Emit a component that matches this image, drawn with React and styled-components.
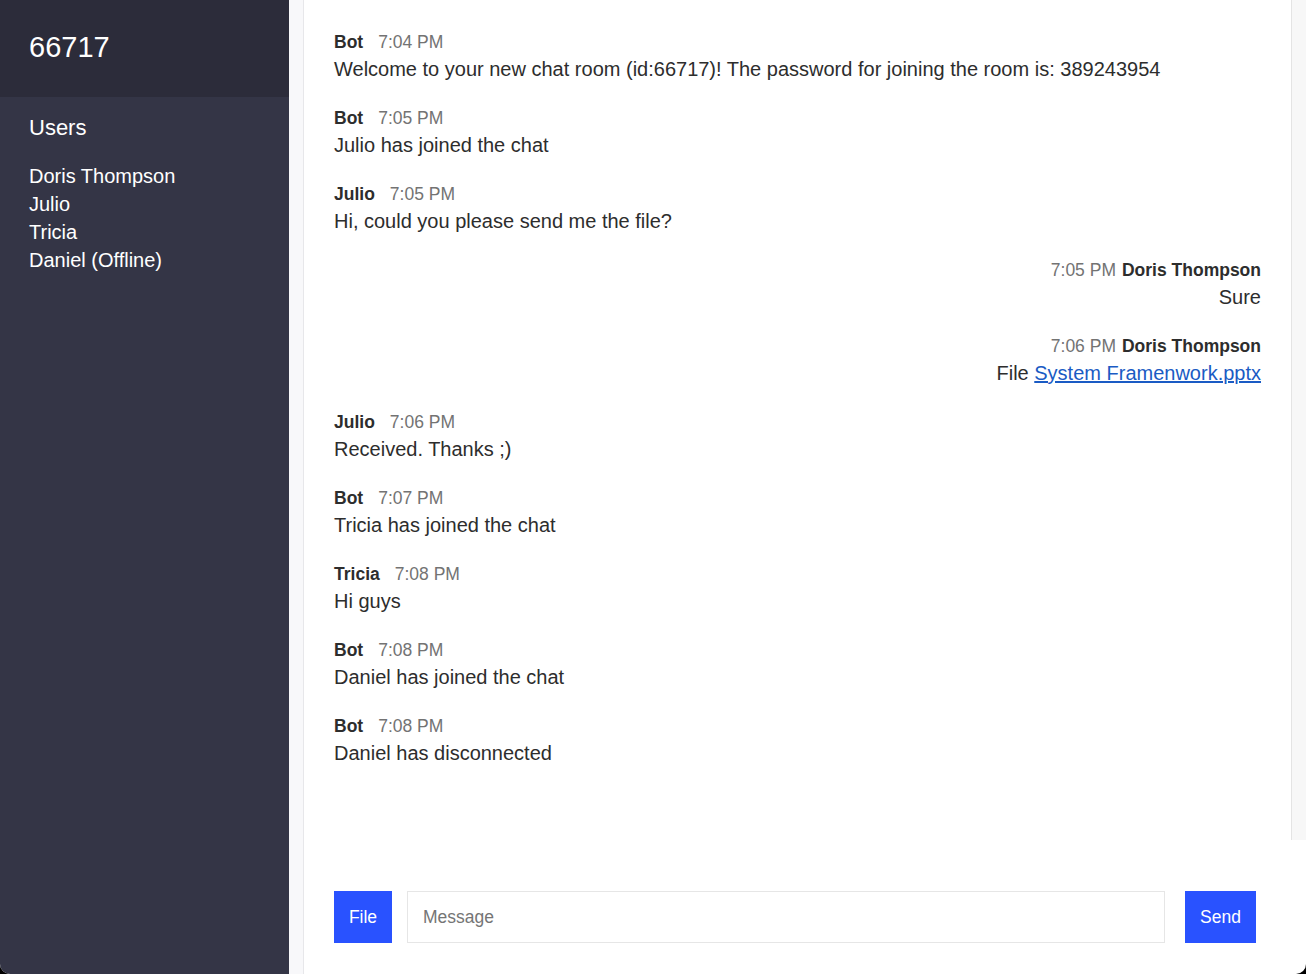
import React from 'react';
import styled, { createGlobalStyle } from 'styled-components';

const GlobalStyle = createGlobalStyle`
  html, body {
    margin: 0;
    padding: 0;
    background: #000;
  }
  body {
    font-family: "Liberation Sans", Arial, sans-serif;
  }
  * {
    box-sizing: border-box;
  }
`;

const Window = styled.div`
  display: flex;
  height: 974px;
  width: 1306px;
  overflow: hidden;
  border-radius: 0 0 10px 10px;
  background: #fff;
`;

const Sidebar = styled.aside`
  width: 289px;
  flex-shrink: 0;
  background-color: #343546;
  color: #fff;
  display: flex;
  flex-direction: column;
`;

const RoomTitle = styled.div`
  height: 97px;
  background-color: #2c2c3a;
  padding: 0 29px 2px;
  display: flex;
  align-items: center;
  font-size: 29px;
`;

const UsersBlock = styled.div`
  padding: 17px 29px;
`;

const UsersHeading = styled.h2`
  margin: 0 0 20px;
  font-size: 22px;
  font-weight: normal;
  line-height: 28px;
`;

const UserList = styled.ul`
  list-style: none;
  margin: 0;
  padding: 0;

  li {
    font-size: 20px;
    line-height: 28px;
  }
`;

const Gutter = styled.div`
  width: 15px;
  flex-shrink: 0;
  background-color: #f8f8fa;
  border-right: 1px solid #e7e7ea;
`;

const ChatPanel = styled.main`
  flex: 1;
  display: flex;
  flex-direction: column;
  min-width: 0;
`;

const ScrollArea = styled.div`
  height: 840px;
  display: flex;
`;

const Messages = styled.div`
  flex: 1;
  padding: 30px 30px;
  color: #2d2d2d;
`;

const ScrollTrack = styled.div`
  width: 15px;
  background-color: #f7f7f7;
  border-left: 1px solid #e4e4e4;
`;

const Message = styled.div`
  margin-bottom: 23px;
  text-align: ${p => (p.$mine ? 'right' : 'left')};
`;

const Meta = styled.div`
  font-size: 17.5px;
  line-height: 24px;
`;

const Author = styled.span`
  font-weight: bold;
  color: #2d2d2d;
`;

const Time = styled.span`
  color: #737373;
  margin: ${p => (p.$mine ? '0 6px 0 0' : '0 0 0 15px')};
`;

const Body = styled.div`
  margin-top: 1px;
  font-size: 20px;
  line-height: 28px;
`;

const FileLink = styled.a`
  color: #1a5bc4;
  text-decoration: underline;
`;

const Composer = styled.form`
  flex: 1;
  display: flex;
  align-items: flex-start;
  padding: 51px 50px 0 30px;
`;

const Button = styled.button`
  width: ${p => p.$w}px;
  height: 52px;
  padding: 0;
  border: none;
  background-color: #2952ff;
  color: #fff;
  font-family: "Liberation Sans", Arial, sans-serif;
  font-size: 17.5px;
  flex-shrink: 0;
`;

const MessageInput = styled.input`
  flex: 1;
  height: 52px;
  margin: 0 20px 0 15px;
  padding: 0 15px;
  border: 1px solid #e6e6e6;
  font-family: "Liberation Sans", Arial, sans-serif;
  font-size: 17.5px;
  color: #333;
  outline: none;

  &::placeholder {
    color: #757575;
  }
`;

const users = ['Doris Thompson', 'Julio', 'Tricia', 'Daniel (Offline)'];

const messages = [
  { from: 'Bot', time: '7:04 PM', text: 'Welcome to your new chat room (id:66717)! The password for joining the room is: 389243954' },
  { from: 'Bot', time: '7:05 PM', text: 'Julio has joined the chat' },
  { from: 'Julio', time: '7:05 PM', text: 'Hi, could you please send me the file?' },
  { from: 'Doris Thompson', time: '7:05 PM', text: 'Sure', mine: true },
  { from: 'Doris Thompson', time: '7:06 PM', file: 'System Framenwork.pptx', mine: true },
  { from: 'Julio', time: '7:06 PM', text: 'Received. Thanks ;)' },
  { from: 'Bot', time: '7:07 PM', text: 'Tricia has joined the chat' },
  { from: 'Tricia', time: '7:08 PM', text: 'Hi guys' },
  { from: 'Bot', time: '7:08 PM', text: 'Daniel has joined the chat' },
  { from: 'Bot', time: '7:08 PM', text: 'Daniel has disconnected' },
];

const App = () => {
  return (
    <>
      <GlobalStyle />
      <Window>
        <Sidebar>
          <RoomTitle>66717</RoomTitle>
          <UsersBlock>
            <UsersHeading>Users</UsersHeading>
            <UserList>
              {users.map(u => <li key={u}>{u}</li>)}
            </UserList>
          </UsersBlock>
        </Sidebar>
        <Gutter />
        <ChatPanel>
          <ScrollArea>
            <Messages>
              {messages.map((m, i) => (
                <Message key={i} $mine={m.mine}>
                  <Meta>
                    {m.mine ? (
                      <>
                        <Time $mine>{m.time}</Time>
                        <Author>{m.from}</Author>
                      </>
                    ) : (
                      <>
                        <Author>{m.from}</Author>
                        <Time>{m.time}</Time>
                      </>
                    )}
                  </Meta>
                  <Body>
                    {m.file ? (
                      <>File <FileLink href="#file">{m.file}</FileLink></>
                    ) : m.text}
                  </Body>
                </Message>
              ))}
            </Messages>
            <ScrollTrack />
          </ScrollArea>
          <Composer onSubmit={e => e.preventDefault()}>
            <Button type="button" $w={58}>File</Button>
            <MessageInput placeholder="Message" />
            <Button type="submit" $w={71}>Send</Button>
          </Composer>
        </ChatPanel>
      </Window>
    </>
  );
};

export default App;
